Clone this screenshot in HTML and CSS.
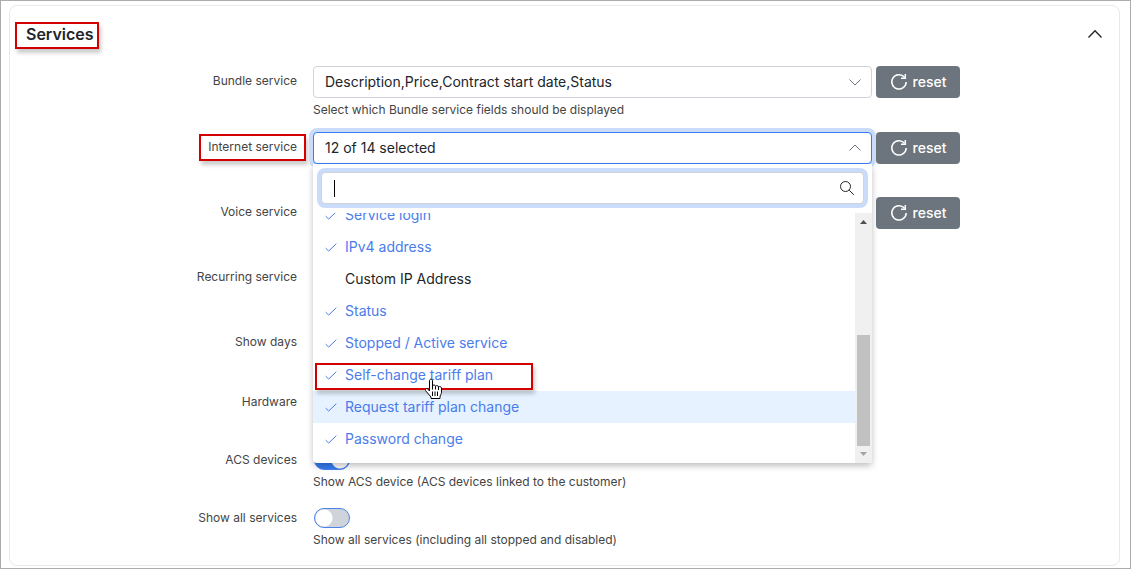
FILE: index.html
```html
<!DOCTYPE html>
<html lang="en">
<head>
<meta charset="utf-8">
<title>Services</title>
<link rel="stylesheet" href="styles.css">
</head>
<body>
<main class="card">
  <header class="card-header">
    <h2 class="card-title marked marked-title">Services</h2>
    <button class="collapse" type="button" aria-label="Collapse"><svg width="16" height="16" viewBox="0 0 16 16"><path d="M1.500 11.500 8 4.700l6.500 6.800"/></svg></button>
  </header>
  <form class="form">
    <div class="row">
      <label class="label" for="bundle">Bundle service</label>
      <div class="field">
        <div class="control">
          <div class="select-wrap">
            <select class="select" id="bundle"><option>Description,Price,Contract start date,Status</option></select>
            <svg class="chevron" width="12" height="12" viewBox="0 0 12 12"><path d="M.5 3.500 6 9l5.500-5.500"/></svg>
          </div>
          <button class="reset" type="button"><svg width="18" height="18" viewBox="0 0 18 18"><path d="M14.500 4.200A7.200 7.200 0 1 0 16.200 9"/><path d="M15.300 1v4.300H11"/></svg>reset</button>
        </div>
        <p class="help">Select which Bundle service fields should be displayed</p>
      </div>
    </div>
    <div class="row">
      <label class="label" for="internet"><span class="marked marked-label">Internet service</span></label>
      <div class="field">
        <div class="control">
          <div class="select-wrap">
            <select class="select select-open" id="internet"><option>12 of 14 selected</option></select>
            <svg class="chevron" width="12" height="12" viewBox="0 0 12 12"><path d="M.5 8.500 6 3l5.500 5.500"/></svg>
            <div class="menu">
              <div class="search">
                <input class="search-input" type="text" aria-label="Search fields">
                <span class="caret"></span>
                <svg class="search-icon" width="16" height="16" viewBox="0 0 16 16"><circle cx="6.500" cy="6.500" r="5"/><path d="m10.200 10.200 4.600 4.600"/></svg>
              </div>
              <div class="menu-body">
                <div class="options">
                  <label class="option"><input class="tick" type="checkbox" checked>Service login</label>
                  <label class="option"><input class="tick" type="checkbox" checked>IPv4 address</label>
                  <label class="option"><input class="tick" type="checkbox">Custom IP Address</label>
                  <label class="option"><input class="tick" type="checkbox" checked>Status</label>
                  <label class="option"><input class="tick" type="checkbox" checked>Stopped / Active service</label>
                  <label class="option option-marked"><input class="tick" type="checkbox" checked>Self-change tariff plan
                    <svg class="pointer" width="20" height="22" viewBox="0 0 20 22"><path d="M5.500 13V2.800C5.500.6 8.500.6 8.500 2.800V8c.5-1.600 3-1.300 3 .4 .6-1.300 3-1 3 .7 .8-1.100 3-.6 3 1.300v3.800c0 2-1.500 3-1.500 5v1.300H7v-1.500L2 13.200C.5 11 2.700 9.600 4 11.200z"/><path d="M8.500 8v3.500M11.500 8.500v3M14.500 9v3M8.500 13.500V18M11 13.500V18M13.500 13.500V18"/></svg>
                  </label>
                  <label class="option option-active"><input class="tick" type="checkbox" checked>Request tariff plan change</label>
                  <label class="option"><input class="tick" type="checkbox" checked>Password change</label>
                </div>
                <div class="scrollbar">
                  <svg width="17" height="17" viewBox="0 0 17 17"><path fill="#505050" d="M5 11h7L8.500 7z"/></svg>
                  <div class="track"><div class="thumb"></div></div>
                  <svg width="17" height="17" viewBox="0 0 17 17"><path fill="#a3a3a3" d="M5 6h7l-3.500 4z"/></svg>
                </div>
              </div>
            </div>
          </div>
          <button class="reset" type="button"><svg width="18" height="18" viewBox="0 0 18 18"><path d="M14.500 4.200A7.200 7.200 0 1 0 16.200 9"/><path d="M15.300 1v4.300H11"/></svg>reset</button>
        </div>
      </div>
    </div>
    <div class="row">
      <label class="label" for="voice">Voice service</label>
      <div class="field">
        <div class="control">
          <div class="select-wrap"><select class="select" id="voice"></select></div>
          <button class="reset" type="button"><svg width="18" height="18" viewBox="0 0 18 18"><path d="M14.500 4.200A7.200 7.200 0 1 0 16.200 9"/><path d="M15.300 1v4.300H11"/></svg>reset</button>
        </div>
      </div>
    </div>
    <div class="row">
      <label class="label" for="recurring">Recurring service</label>
      <div class="field"><select class="select" id="recurring"></select></div>
    </div>
    <div class="row">
      <label class="label" for="days">Show days</label>
      <div class="field"><div class="control"><div class="select-wrap"><select class="select" id="days"></select></div><span class="reset-space"></span></div></div>
    </div>
    <div class="row row-switch">
      <label class="label" for="hardware">Hardware</label>
      <div class="field"><input class="switch" type="checkbox" id="hardware" checked></div>
    </div>
    <div class="row row-switch">
      <label class="label" for="acs">ACS devices</label>
      <div class="field"><input class="switch" type="checkbox" id="acs" checked><p class="help">Show ACS device (ACS devices linked to the customer)</p></div>
    </div>
    <div class="row row-switch">
      <label class="label" for="all">Show all services</label>
      <div class="field"><input class="switch" type="checkbox" id="all"><p class="help">Show all services (including all stopped and disabled)</p></div>
    </div>
  </form>
</main>
</body>
</html>
```

FILE: styles.css
```css
*,
*::before,
*::after {
  box-sizing: border-box;
}

body {
  margin: 0;
  min-height: 100vh;
  padding: 4px 10px 2px 8px;
  border: 1px solid #acacac;
  background: #fff;
  color: #212529;
  font: 14px/20px Inter, "Liberation Sans", sans-serif;
}

svg {
  display: block;
  flex: none;
  fill: none;
  stroke: currentColor;
}

.card {
  padding: 0 16px;
  border: 1px solid #e9e9e9;
  border-radius: 8px;
}

.card-header {
  display: flex;
  align-items: center;
  justify-content: space-between;
  height: 60px;
  padding-bottom: 4px;
}

.card-title {
  margin: 0;
  font-size: 16px;
  font-weight: 600;
  line-height: 20px;
}

.collapse {
  padding: 0;
  border: 0;
  background: none;
  color: #222;
}

.collapse svg {
  stroke-width: 1.3;
}

.marked {
  position: relative;
}

.marked::after,
.option-marked::after {
  content: "";
  position: absolute;
  border: 2px solid #d40000;
  box-shadow: 2px 4px 4px rgba(0, 0, 0, 0.2);
  pointer-events: none;
}

.marked-title::after {
  inset: -2px -5px -5px -11px;
}

.marked-label::after {
  inset: -5px -9px -7px -9px;
}

.row {
  display: grid;
  grid-template-columns: 271fr 647fr 127fr;
  column-gap: 16px;
  align-items: start;
  min-height: 65px;
}

.row-switch {
  min-height: 58px;
}

.row-switch:last-child {
  min-height: 57px;
}

.label {
  padding-top: 5px;
  color: #444;
  font-size: 12px;
  text-align: right;
}

.row-switch .label {
  padding-top: 0;
}

.field {
  display: flex;
  flex-direction: column;
  min-width: 0;
}

.field > .select {
  width: 86%;
}

.control {
  display: flex;
  gap: 4px;
}

.select-wrap {
  position: relative;
  flex: 1;
  min-width: 0;
}

.select {
  display: block;
  width: 100%;
  height: 32px;
  padding: 0 32px 0 11px;
  appearance: none;
  border: 1px solid #ced4da;
  border-radius: 4px;
  background: #fff;
  color: #212529;
  font: inherit;
}

.select-open {
  border-color: #357bf2;
  box-shadow: 0 0 0 4px #cbdcfb;
}

.chevron {
  position: absolute;
  top: 10px;
  right: 11px;
  color: #6c757d;
  pointer-events: none;
}

.reset,
.reset-space {
  flex: none;
  width: 84px;
}

.reset {
  position: relative;
  display: flex;
  align-items: center;
  justify-content: center;
  gap: 5px;
  height: 32px;
  padding: 0;
  border: 0;
  border-radius: 4px;
  background: #6c757d;
  color: #fff;
  font: 500 14px/20px Inter, "Liberation Sans", sans-serif;
}

.reset svg {
  stroke-width: 1.5;
}

.help {
  margin: 4px 0 14px;
  color: #444;
  font-size: 12px;
  line-height: 16px;
}

.row-switch .help {
  margin-bottom: 0;
}

.menu {
  position: absolute;
  z-index: 2;
  top: 32px;
  right: 0;
  left: 0;
  padding-top: 8px;
  border-radius: 0 0 4px 4px;
  background: #fff;
  box-shadow: 0 3px 6px rgba(0, 0, 0, 0.25);
}

.search {
  position: relative;
  margin: 0 8px 9px;
}

.search-input {
  display: block;
  width: 100%;
  height: 32px;
  padding: 0 32px 0 12px;
  border: 1px solid #ced4da;
  border-radius: 4px;
  outline: 0;
  box-shadow: 0 0 0 4px #cbdcfb;
  font: inherit;
}

.caret {
  position: absolute;
  top: 8px;
  left: 13px;
  width: 1px;
  height: 17px;
  background: #000;
}

.search-icon {
  position: absolute;
  top: 8px;
  right: 9px;
  color: #222;
}

.menu-body {
  display: flex;
  height: 250px;
}

.options {
  display: flex;
  flex: 1;
  flex-direction: column;
  justify-content: flex-end;
  padding-bottom: 8px;
  overflow: hidden;
}

.option {
  position: relative;
  display: flex;
  flex: none;
  align-items: center;
  gap: 8px;
  height: 32px;
  padding-left: 12px;
  color: #212529;
}

.option:has(:checked) {
  color: #4a7cec;
}

.option-active {
  background: #e6f2ff;
}

.option-marked {
  z-index: 1;
}

.option-marked::after {
  top: 4px;
  left: 2px;
  width: 218px;
  height: 27px;
}

.tick {
  width: 12px;
  height: 12px;
  margin: 0;
  appearance: none;
}

.tick:checked {
  background: url("data:image/svg+xml,%3Csvg xmlns='http://www.w3.org/2000/svg' viewBox='0 0 12 12'%3E%3Cpath d='M.7 7.200 3.700 10 11.300 2.700' fill='none' stroke='%234a7cec'/%3E%3C/svg%3E");
}

.pointer {
  position: absolute;
  z-index: 2;
  top: 19px;
  left: 111px;
  fill: #fff;
  stroke: #000;
}

.scrollbar {
  display: flex;
  flex-direction: column;
  width: 17px;
  background: #f0f0f0;
}

.scrollbar svg {
  stroke: none;
}

.track {
  display: flex;
  flex: 1;
  flex-direction: column;
  justify-content: flex-end;
  padding: 0 2px;
}

.thumb {
  height: 111px;
  background: #c1c1c1;
}

.switch {
  width: 36px;
  height: 20px;
  margin: 0 1px;
  appearance: none;
  border: 1px solid #4a82ea;
  border-radius: 10px;
  background: radial-gradient(circle at 9px 9px, #fff 8px, #ced4da 9px);
}

.switch:checked {
  background: radial-gradient(circle at 25px 9px, #fff 8px, #357bf2 9px);
}
```
